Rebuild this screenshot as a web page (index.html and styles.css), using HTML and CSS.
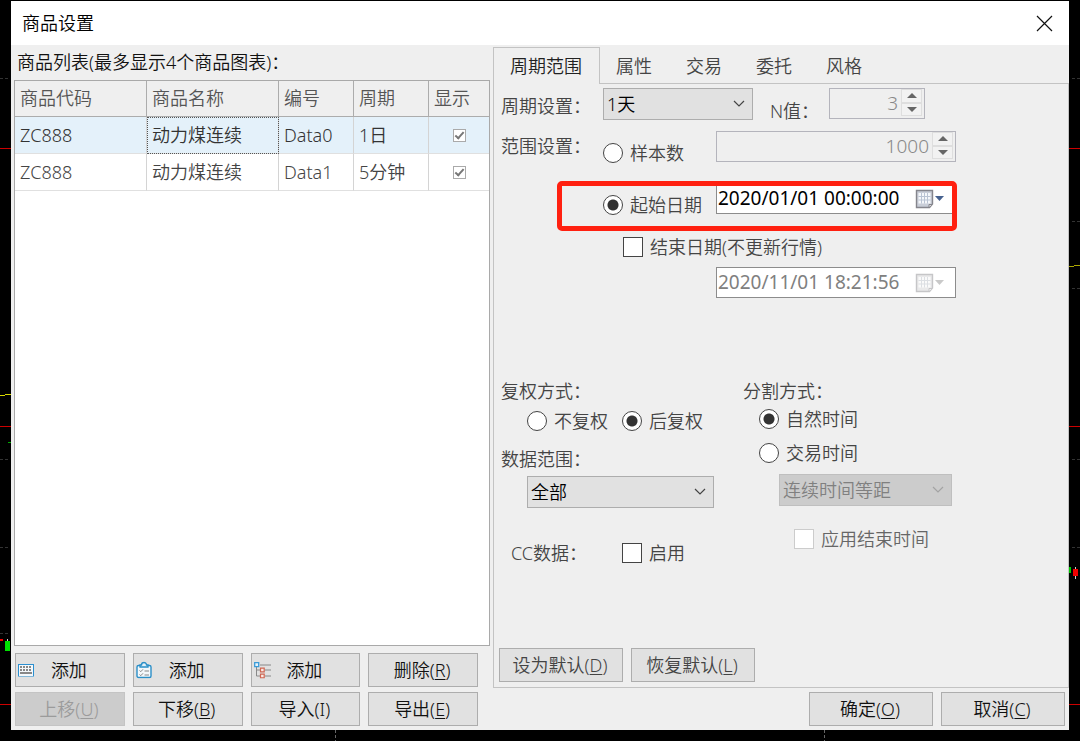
FILE: index.html
```html
<!DOCTYPE html>
<html lang="zh-CN">
<head>
<meta charset="utf-8">
<title>商品设置</title>
<link rel="stylesheet" href="styles.css">
</head>
<body class="desktop">
<svg class="chart chart-left" width="11" height="741" viewBox="0 0 11 741" shape-rendering="crispEdges" aria-hidden="true">
  <g stroke="#333" stroke-dasharray="3 2"><path d="M0 78.5H8M0 459.5H8M0 547.5H8M0 633.5H8"/></g>
  <path d="M0 148.5H11M0 426.5H11M0 704.5H11" stroke="#c00"/>
  <path d="M0 395.5H5M5 394.5H11" stroke="#d6d600"/>
  <path d="M8 442.5H11" stroke="#0a0"/>
  <path d="M0 640H3" stroke="#e00" stroke-width="2"/>
  <path d="M7.500 639V642" stroke="#ccc"/>
  <path d="M5 641H10V651H5Z" fill="#00e000"/>
</svg>
<svg class="chart chart-right" width="11" height="741" viewBox="0 0 11 741" shape-rendering="crispEdges" aria-hidden="true">
  <g stroke="#333" stroke-dasharray="3 2"><path d="M3 78.5H11M3 221.500H11M3 288.500H11M3 459.500H11M3 547.500H11"/></g>
  <path d="M0 148.500H11M0 426.500H11M0 704.500H11" stroke="#c00"/>
  <path d="M0 266.500H5M5 265.500H11" stroke="#aaa600"/>
  <path d="M0 567H2V573H0Z" fill="#0c0"/>
  <path d="M6.500 567V579" stroke="#ccc"/>
  <path d="M4 569H9V576H4Z" fill="#e00"/>
</svg>
<svg class="chart chart-bottom" width="500" height="11" viewBox="0 0 500 11" shape-rendering="crispEdges" aria-hidden="true">
  <path d="M5.500 0V11M494.500 0V11" stroke="#666" stroke-dasharray="3 2"/>
</svg>

<main class="dialog">
  <header class="titlebar">
    <h1 class="title">商品设置</h1>
    <button class="close" type="button" aria-label="关闭">
      <svg width="17" height="17" viewBox="0 0 17 17"><path d="M1 1L16 16M16 1L1 16" stroke="#111" stroke-width="1.200" fill="none"/></svg>
    </button>
  </header>

  <div class="content">
    <section class="list-pane">
      <h2 class="list-label">商品列表(最多显示4个商品图表)：</h2>
      <div class="list-box">
        <table class="list">
          <colgroup><col class="c-code"><col class="c-name"><col class="c-id"><col class="c-period"><col></colgroup>
          <thead>
            <tr><th>商品代码</th><th>商品名称</th><th>编号</th><th>周期</th><th>显示</th></tr>
          </thead>
          <tbody>
            <tr class="selected"><td>ZC888</td><td class="focused">动力煤连续</td><td>Data0</td><td>1日</td><td class="tick"><input class="check small" type="checkbox" checked aria-label="显示 Data0"></td></tr>
            <tr><td>ZC888</td><td>动力煤连续</td><td>Data1</td><td>5分钟</td><td class="tick"><input class="check small" type="checkbox" checked aria-label="显示 Data1"></td></tr>
          </tbody>
        </table>
      </div>
      <div class="list-actions">
        <button class="btn with-icon" type="button">
          <svg class="btn-icon" width="16" height="13" viewBox="0 0 16 13" shape-rendering="crispEdges"><path d="M.5.5H15.500V12.500H.5Z" fill="#f4f8fb" stroke="#2a8fd0"/><path d="M2 3.500H14M2 6.500H14" stroke="#888" stroke-width="2" stroke-dasharray="2 1"/><path d="M2 9.500H14" stroke="#888" stroke-width="2"/></svg>添加</button>
        <button class="btn with-icon" type="button">
          <svg class="btn-icon" width="16" height="17" viewBox="0 0 16 17"><rect x="1" y="4" width="14" height="12" rx="1.500" fill="#f4f8fb" stroke="#2a8fc8" stroke-width="1.400"/><path d="M4 5.500V3.500H5.500A2.500 2.500 0 0 1 10.500 3.500H12V5.500Z" fill="#e3f1f9" stroke="#2a8fc8" stroke-width="1.300"/><path d="M3.500 9L4.800 10.200L7 7.800M3.500 13L4.800 14.200L7 11.800M8.500 9.500H13M8.500 13.500H13" fill="none" stroke="#888"/></svg>添加</button>
        <button class="btn with-icon" type="button">
          <svg class="btn-icon" width="17" height="17" viewBox="0 0 17 17"><path d="M6 3.500H17M2.500 5V14.500H6M2.500 8.500H6M11 8.500H17M11 14.500H17" fill="none" stroke="#888"/><path d="M.7 1.200H4.700V5.200H.7Z" fill="#e6f3fb" stroke="#3a9bd8" stroke-width="1.300"/><path d="M6.500 6.700H10.200V10.300H6.500ZM6.500 12.700H10.200V16.300H6.500Z" fill="#fbeae6" stroke="#cf6652" stroke-width="1.200"/></svg>添加</button>
        <button class="btn" type="button">删除(<u>R</u>)</button>
        <button class="btn" type="button" disabled>上移(<u>U</u>)</button>
        <button class="btn" type="button">下移(<u>B</u>)</button>
        <button class="btn" type="button">导入(I)</button>
        <button class="btn" type="button">导出(<u>E</u>)</button>
      </div>
    </section>

    <section class="settings-pane">
      <nav class="tabs" role="tablist">
        <button class="tab active" type="button" role="tab" aria-selected="true">周期范围</button>
        <button class="tab" type="button" role="tab">属性</button>
        <button class="tab" type="button" role="tab">交易</button>
        <button class="tab" type="button" role="tab">委托</button>
        <button class="tab" type="button" role="tab">风格</button>
      </nav>
      <form class="panel">
        <div class="row">
          <label class="caption" for="period">周期设置：</label>
          <span class="select-wrap period"><select class="select" id="period"><option>1天</option></select><svg class="chevron" width="12" height="8" viewBox="0 0 12 8"><path d="M1 1L6 6L11 1" fill="none" stroke="#444" stroke-width="1.200"/></svg></span>
          <label class="n-label" for="nvalue">N值：</label>
          <span class="spin n-spin"><input class="spin-input" id="nvalue" type="number" value="3" disabled><span class="spin-buttons"><button class="spin-btn up" type="button" disabled aria-label="增加"></button><button class="spin-btn down" type="button" disabled aria-label="减少"></button></span></span>
        </div>

        <div class="row range-row sample-row">
          <span class="caption">范围设置：</span>
          <label class="choice"><input class="radio" type="radio" name="range">样本数</label>
          <span class="spin field"><input class="spin-input" type="number" value="1000" disabled aria-label="样本数"><span class="spin-buttons"><button class="spin-btn up" type="button" disabled aria-label="增加"></button><button class="spin-btn down" type="button" disabled aria-label="减少"></button></span></span>
        </div>

        <div class="row range-row start-row">
          <label class="choice"><input class="radio" type="radio" name="range" checked>起始日期</label>
          <span class="date field"><input class="date-input" type="text" value="2020/01/01 00:00:00" aria-label="起始日期"><button class="date-btn" type="button" aria-label="选择日期"><svg width="29" height="20" viewBox="0 0 29 20"><path d="M1.500 1.500H17.500V15L14.500 18.500H1.500Z" fill="#c9ced8" stroke="#85858c" stroke-width="1.400"/><path d="M3.500 4H15.500V14.500H3.500Z" fill="#f5f7fa"/><path d="M3.500 7.500H15.500M3.500 11H15.500M6.500 4V14.500M9.500 4V14.500M12.500 4V14.500" stroke="#b9c3d3" fill="none"/><path d="M14 18V15.500H17" fill="#eee" stroke="#85858c"/><path d="M20 7H29L24.500 12Z" fill="#46618f"/></svg></button></span>
        </div>

        <div class="row end-row">
          <label class="choice"><input class="check" type="checkbox">结束日期(不更新行情)</label>
        </div>

        <div class="row end-date-row">
          <span class="date field"><input class="date-input" type="text" value="2020/11/01 18:21:56" disabled aria-label="结束日期"><button class="date-btn" type="button" disabled aria-label="选择日期"><svg width="29" height="20" viewBox="0 0 29 20"><path d="M1.500 1.500H17.500V15L14.500 18.500H1.500Z" fill="#e9e9ea" stroke="#c6c6c8" stroke-width="1.400"/><path d="M3.500 4H15.500V14.500H3.500Z" fill="#fafafa"/><path d="M3.500 7.500H15.500M3.500 11H15.500M6.500 4V14.500M9.500 4V14.500M12.500 4V14.500" stroke="#dcdfe3" fill="none"/><path d="M14 18V15.500H17" fill="#fafafa" stroke="#c6c6c8"/><path d="M20 7H29L24.500 12Z" fill="#c9c9c9"/></svg></button></span>
        </div>

        <div class="groups">
          <div class="group adjust">
            <span class="caption">复权方式：</span>
            <div class="adjust-options">
              <label class="choice"><input class="radio" type="radio" name="adjust">不复权</label>
              <label class="choice"><input class="radio" type="radio" name="adjust" checked>后复权</label>
            </div>
            <label class="caption data-caption" for="data-range">数据范围：</label>
            <span class="select-wrap data-range"><select class="select" id="data-range"><option>全部</option></select><svg class="chevron" width="12" height="8" viewBox="0 0 12 8"><path d="M1 1L6 6L11 1" fill="none" stroke="#444" stroke-width="1.200"/></svg></span>
            <div class="cc-row">
              <span class="cc-caption">CC数据：</span>
              <label class="choice"><input class="check" type="checkbox">启用</label>
            </div>
          </div>
          <div class="group split">
            <span class="caption">分割方式：</span>
            <div class="split-options">
              <label class="choice"><input class="radio" type="radio" name="split" checked>自然时间</label>
              <label class="choice"><input class="radio" type="radio" name="split">交易时间</label>
              <span class="select-wrap spacing"><select class="select" disabled aria-label="时间等距"><option>连续时间等距</option></select><svg class="chevron" width="12" height="8" viewBox="0 0 12 8"><path d="M1 1L6 6L11 1" fill="none" stroke="#a3a3a3" stroke-width="1.200"/></svg></span>
              <label class="choice apply-end"><input class="check" type="checkbox" disabled>应用结束时间</label>
            </div>
          </div>
        </div>

        <div class="defaults">
          <button class="btn" type="button">设为默认(<u>D</u>)</button>
          <button class="btn" type="button">恢复默认(<u>L</u>)</button>
        </div>
      </form>
      <footer class="confirm">
        <button class="btn" type="button">确定(<u>O</u>)</button>
        <button class="btn" type="button">取消(<u>C</u>)</button>
      </footer>
    </section>
  </div>
</main>
</body>
</html>
```

FILE: styles.css
```css
*,
*::before,
*::after {
  box-sizing: border-box;
}

.desktop {
  margin: 0;
  min-height: 100vh;
  padding: 1px 11px 11px;
  display: flex;
  position: relative;
  background: #000;
  color: #444;
  font: 350 18px/26px "Noto Sans", "Noto Sans CJK SC", sans-serif;
}

button,
input,
select {
  font: inherit;
  color: inherit;
  margin: 0;
}

/* Chart fragments visible behind the dialog */
.chart {
  position: absolute;
}

.chart-left {
  left: 0;
  top: 0;
}

.chart-right {
  right: 0;
  top: 0;
}

.chart-bottom {
  left: 330px;
  bottom: 0;
}

.dialog {
  flex: 1;
  display: flex;
  flex-direction: column;
  background: #efefef;
}

.titlebar {
  height: 44px;
  padding: 0 16px 0 11px;
  display: flex;
  align-items: center;
  justify-content: space-between;
  background: #fff;
  color: #000;
}

.title,
.list-label {
  margin: 0;
  font-size: 18px;
  font-weight: 350;
}

.close {
  display: flex;
  padding: 0;
  border: 0;
  background: none;
}

.content {
  flex: 1;
  display: flex;
  gap: 3px;
}

/* Left pane */
.list-pane {
  flex: 0 0 479px;
  padding: 4px 0 4px 3px;
  display: flex;
  flex-direction: column;
}

.list-label {
  padding-left: 3px;
  margin-bottom: 5px;
  color: #111;
}

.list-box {
  flex: 1;
  border: 1px solid #a9a9a9;
  background: #fff;
}

.list {
  width: 100%;
  table-layout: fixed;
  border-collapse: separate;
  border-spacing: 0;
}

.c-code,
.c-name {
  width: 132px;
}

.c-id,
.c-period {
  width: 75px;
}

.list th,
.list td {
  height: 37px;
  padding: 0 5px;
  text-align: left;
  font-weight: 350;
  white-space: nowrap;
  border-right: 1px solid #d4d4d4;
  border-bottom: 1px solid #e0e0e0;
}

.list th {
  height: 36px;
  padding-bottom: 2px;
  background: #efefef;
  border-color: #acacac;
  color: #555;
}

.list th:last-child,
.list td:last-child {
  border-right: 0;
}

.list .selected td {
  background: #e4f1fa;
  color: #333;
}

.list .focused {
  outline: 1px dotted #555;
  outline-offset: -1px;
}

.list .tick {
  text-align: center;
  line-height: 0;
}

.list-actions {
  display: grid;
  grid-template-columns: repeat(4, 1fr);
  gap: 5px 8px;
  padding: 7px 12px 0 1px;
}

.btn {
  position: relative;
  height: 34px;
  padding: 0 2px 0 0;
  border: 1px solid #adadad;
  background: #e1e1e1;
  color: #111;
}

.btn:disabled {
  border-color: #c4c4c4;
  background: #ccc;
  color: #9b9b9b;
}

.btn u {
  text-underline-offset: 2px;
  text-decoration-thickness: 1px;
}

.btn-icon {
  position: absolute;
  left: 2px;
  top: 50%;
  transform: translateY(-50%);
}

/* Right pane */
.settings-pane {
  flex: 1;
  padding: 2px 0 4px;
  display: flex;
  flex-direction: column;
}

.tabs {
  display: flex;
  height: 37px;
  box-shadow: inset 0 -1px #c3c3c3;
}

.tab {
  padding: 0 17px;
  border: 0;
  background: none;
}

.tab.active {
  padding: 0 17px 0 16px;
  margin-right: -1px;
  background: #efefef;
  border: 1px solid #c3c3c3;
  border-bottom: 0;
  color: #222;
}

.panel {
  flex: 1;
  display: flex;
  flex-direction: column;
  padding: 4px 5px 5px;
  border: 1px solid #c3c3c3;
  border-top: 0;
}

.row {
  display: flex;
  padding-left: 2px;
}

.row > .caption {
  width: 102px;
  padding-top: 5px;
}

.choice {
  display: flex;
  align-items: center;
  gap: 7px;
  white-space: nowrap;
}

.range-row .choice {
  width: 113px;
  height: 28px;
  margin-top: 8px;
}

.sample-row {
  margin-top: 11px;
}

.sample-row > .caption {
  padding-top: 2px;
}

.start-row {
  position: relative;
  margin-top: 16px;
  padding-left: 104px;
}

.start-row::after {
  content: "";
  position: absolute;
  left: 58px;
  top: -2px;
  width: 400px;
  height: 50px;
  border: 5px solid #ff2010;
  border-radius: 5px;
  pointer-events: none;
}

.end-row {
  margin-top: 16px;
  padding-left: 124px;
}

.end-row .choice {
  height: 24px;
}

.end-date-row {
  margin-top: 8px;
  padding-left: 217px;
}

.select-wrap {
  position: relative;
  display: block;
  height: 32px;
}

.select {
  appearance: none;
  width: 100%;
  height: 100%;
  padding: 0 3px;
  border: 1px solid #adadad;
  border-radius: 0;
  background: #e1e1e1;
  color: #000;
}

.select:disabled {
  border-color: #bfbfbf;
  background: #ccc;
  color: #808080;
  opacity: 1;
}

.chevron {
  position: absolute;
  right: 8px;
  top: 12px;
  pointer-events: none;
}

.period {
  width: 150px;
}

.n-label {
  width: 76px;
  height: 32px;
  padding: 10px 0 0 17px;
  white-space: nowrap;
}

.spin,
.date {
  display: flex;
  height: 31px;
  border: 1px solid #b4b4bc;
}

.spin {
  padding: 0 2px 2px 0;
}

.n-spin {
  width: 96px;
}

.field {
  width: 240px;
}

.spin-input,
.date-input {
  flex: 1;
  min-width: 0;
  padding: 0;
  border: 0;
  background: none;
  font-size: 19px;
}

.spin-input {
  appearance: textfield;
  padding-right: 3px;
  text-align: right;
  color: #888;
}

.spin-input::-webkit-inner-spin-button {
  appearance: none;
  margin: 0;
}

.spin-buttons {
  display: grid;
  grid-template-rows: 1fr 1fr;
  width: 21px;
}

.spin-btn {
  display: grid;
  place-items: center;
  padding: 0;
  border: 1px solid #dedede;
  background: #f2f2f2;
}

.spin-btn::before {
  content: "";
  border: 5px solid transparent;
}

.spin-btn.up::before {
  border-top: 0;
  border-bottom-color: #666;
}

.spin-btn.down::before {
  border-bottom: 0;
  border-top-color: #666;
}

.date {
  border-color: #8c8c8c;
  background: #fff;
  color: #000;
}

.date-input {
  padding: 0 0 2px 1px;
  font-weight: 400;
}

.date-input:disabled {
  color: #808080;
}

.date-btn {
  display: flex;
  align-items: center;
  padding: 0 11px 0 0;
  border: 0;
  background: none;
}

/* Radio buttons and tick boxes */
.radio,
.check {
  appearance: none;
  flex: none;
  width: 20px;
  height: 20px;
  border: 1px solid #444;
  background: #fff;
}

.radio {
  border-radius: 50%;
}

.radio:checked {
  background: radial-gradient(circle, #333 5px, #fff 6px);
}

.check:disabled {
  border-color: #ccc;
}

.check.small {
  display: inline-grid;
  place-items: center;
  width: 13px;
  height: 13px;
  border-color: #aaa;
  vertical-align: middle;
}

.check.small:checked::before {
  content: "";
  width: 9px;
  height: 5px;
  border: solid #777;
  border-width: 0 0 2px 2px;
  transform: translateY(-1px) rotate(-48deg);
}

/* Lower option groups */
.groups {
  display: flex;
  margin-top: 80px;
  padding-left: 2px;
}

.group {
  display: flex;
  flex-direction: column;
}

.adjust {
  width: 242px;
}

.adjust-options {
  display: flex;
  gap: 14px;
  margin-top: 4px;
  padding-left: 26px;
}

.data-caption {
  margin-top: 12px;
}

.data-range {
  width: 187px;
  margin: 4px 0 0 26px;
}

.cc-row {
  display: flex;
  margin-top: 32px;
  padding-left: 10px;
}

.cc-caption {
  width: 111px;
}

.split-options {
  display: flex;
  flex-direction: column;
  gap: 8px;
  padding: 2px 0 0 16px;
}

.spacing {
  width: 173px;
  margin-left: 20px;
}

.apply-end {
  margin: 12px 0 0 35px;
  color: #666;
}

.defaults {
  display: flex;
  gap: 8px;
  margin-top: auto;
}

.defaults .btn {
  width: 124px;
  color: #444;
}

.confirm {
  display: flex;
  justify-content: flex-end;
  gap: 8px;
  padding: 4px 4px 0 0;
}

.confirm .btn {
  width: 124px;
}
```
